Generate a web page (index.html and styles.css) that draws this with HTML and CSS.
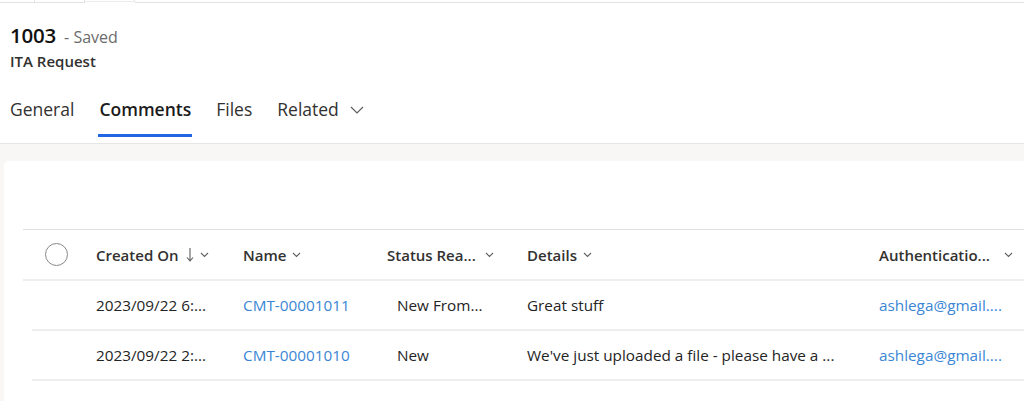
FILE: index.html
```html
<!DOCTYPE html>
<html lang="en">
<head>
<meta charset="utf-8">
<title>1003 - ITA Request</title>
<link rel="stylesheet" href="styles.css">
</head>
<body>
<div class="topbar">
  <span class="seg seg-a"></span>
  <span class="seg seg-b"></span>
  <span class="seg seg-c"></span>
  <span class="seg seg-d"></span>
</div>
<header class="head">
  <div class="title-row">
    <span class="title">1003</span>
    <span class="saved">- Saved</span>
  </div>
  <div class="entity">ITA Request</div>
</header>
<nav class="tabs">
  <span class="tab">General</span>
  <span class="tab active">Comments</span>
  <span class="tab">Files</span>
  <span class="tab">Related
    <svg class="tab-chev" width="14" height="8" viewBox="0 0 14 8"><path d="M1 1l6 6 6-6" fill="none" stroke="#605e5c" stroke-width="1.2"/></svg>
  </span>
</nav>
<main class="canvas">
  <section class="card">
    <div class="grid">
      <div class="row header">
        <div class="cell check"><span class="circle"></span></div>
        <div class="cell"><span class="htext">Created On</span><svg class="sort" width="8" height="16" viewBox="0 0 8 16"><path d="M4 1v13M1 10.5L4 14l3-3.5" fill="none" stroke="#605e5c" stroke-width="1.1"/></svg><svg class="chev" width="9" height="6" viewBox="0 0 9 6"><path d="M1 1l3.5 3.5L8 1" fill="none" stroke="#605e5c" stroke-width="1.1"/></svg></div>
        <div class="cell"><span class="htext">Name</span><svg class="chev" width="9" height="6" viewBox="0 0 9 6"><path d="M1 1l3.5 3.5L8 1" fill="none" stroke="#605e5c" stroke-width="1.1"/></svg></div>
        <div class="cell spread status"><span class="htext">Status Rea...</span><svg class="chev" width="9" height="6" viewBox="0 0 9 6"><path d="M1 1l3.5 3.5L8 1" fill="none" stroke="#605e5c" stroke-width="1.1"/></svg></div>
        <div class="cell"><span class="htext">Details</span><svg class="chev" width="9" height="6" viewBox="0 0 9 6"><path d="M1 1l3.5 3.5L8 1" fill="none" stroke="#605e5c" stroke-width="1.1"/></svg></div>
        <div class="cell spread auth"><span class="htext">Authenticatio...</span><svg class="chev" width="9" height="6" viewBox="0 0 9 6"><path d="M1 1l3.5 3.5L8 1" fill="none" stroke="#605e5c" stroke-width="1.1"/></svg></div>
      </div>
      <div class="row data">
        <div class="cell check"></div>
        <div class="cell">2023/09/22 6:...</div>
        <div class="cell"><span class="link">CMT-00001011</span></div>
        <div class="cell indent">New From...</div>
        <div class="cell">Great stuff</div>
        <div class="cell"><span class="link">ashlega@gmail....</span></div>
      </div>
      <div class="row data">
        <div class="cell check"></div>
        <div class="cell">2023/09/22 2:...</div>
        <div class="cell"><span class="link">CMT-00001010</span></div>
        <div class="cell indent">New</div>
        <div class="cell">We've just uploaded a file - please have a ...</div>
        <div class="cell"><span class="link">ashlega@gmail....</span></div>
      </div>
    </div>
  </section>
</main>
</body>
</html>
```

FILE: styles.css
```css
* { box-sizing: border-box; }
html, body { margin: 0; padding: 0; }
body {
  width: 1024px;
  height: 401px;
  overflow: hidden;
  background: #ffffff;
  font-family: "Open Sans", "Noto Sans", "Liberation Sans", sans-serif;
  color: #242424;
  display: flex;
  flex-direction: column;
}

.topbar {
  display: flex;
  height: 4px;
  flex: none;
}
.seg {
  height: 3px;
  border-bottom: 1px solid #e3e3e3;
  border-right: 1px solid #e3e3e3;
}
.seg-a { width: 35px; }
.seg-b { width: 50px; }
.seg-c { width: 50px; border-bottom-color: #ececec; height: 2px; }
.seg-d { flex: 1; border-right: none; }

.head {
  padding: 17px 0 0 10px;
  flex: none;
}
.title-row {
  display: flex;
  align-items: baseline;
  gap: 8px;
  height: 30px;
}
.title {
  font-size: 20.5px;
  font-weight: 600;
  color: #111111;
  letter-spacing: -0.2px;
}
.saved {
  font-size: 16px;
  color: #6b6b6b;
}
.entity {
  font-size: 15px;
  font-weight: 600;
  color: #323130;
  margin-top: 0;
}

.tabs {
  display: flex;
  gap: 25px;
  padding: 23px 0 6px 10px;
  border-bottom: 1px solid #e6e6e6;
  flex: none;
}
.tab {
  display: flex;
  align-items: center;
  gap: 11px;
  font-size: 17.5px;
  color: #323130;
  height: 43px;
  padding-bottom: 10px;
  border-bottom: 3px solid transparent;
}
.tab.active {
  font-weight: 600;
  color: #1b1b1b;
  border-bottom-color: #2266e3;
  padding: 0 1px 10px;
  margin: 0 -1px;
}
.tab-chev { margin-top: 2px; }

.canvas {
  background: #f8f7f6;
  padding: 17px 0 0 4px;
  flex: 1;
}
.card {
  background: #ffffff;
  border-top-left-radius: 5px;
  height: 100%;
  padding: 68px 0 0 19px;
}

.row {
  display: grid;
  align-items: center;
}
.row.header {
  grid-template-columns: 59px 147px 144px 140px 352px 159px;
  height: 52px;
  border-top: 1px solid #e1dfdd;
  border-bottom: 2px solid #efeeed;
  font-size: 15px;
  font-weight: 600;
  color: #323130;
}
.row.data {
  height: 50px;
  margin-left: 9px;
  grid-template-columns: 50px 147px 144px 140px 352px 159px;
  border-bottom: 2px solid #efeeed;
  font-size: 15.3px;
  color: #242424;
}
.cell {
  display: flex;
  align-items: center;
  padding-left: 14px;
  white-space: nowrap;
  overflow: hidden;
}
.cell.check { padding-left: 22px; }
.cell.spread { justify-content: space-between; }
.cell.status { padding-right: 19px; }
.cell.auth { padding-right: 11px; }
.cell.indent { padding-left: 24px; }
.circle {
  width: 23px;
  height: 23px;
  border-radius: 50%;
  border: 1px solid #8a8886;
}
.htext { margin-right: 6px; }
.sort {
  margin-right: 6px;
  margin-left: 2px;
}
.chev { margin-top: 1px; }
.link { color: #3a86d4; }
```
